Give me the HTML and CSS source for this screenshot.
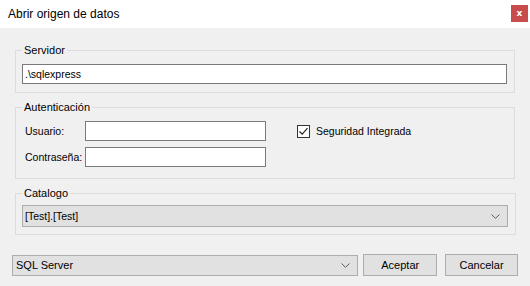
FILE: index.html
```html
<!DOCTYPE html>
<html lang="es">
<head>
    <meta charset="UTF-8">
    <title>Abrir origen de datos</title>
    <link rel="stylesheet" href="styles.css">
</head>
<body>

<div class="dialog">
    <!-- Barra de titulo -->
    <div class="title-bar">
        <span class="title">Abrir origen de datos</span>
        <button class="close-button">x</button>
    </div>

    <div class="content">
        <!-- Servidor -->
        <fieldset class="group">
            <legend>Servidor</legend>
            <input type="text" class="textbox wide" value=".\sqlexpress">
        </fieldset>

        <!-- Autenticacion -->
        <fieldset class="group">
            <legend>Autenticación</legend>
            <div class="auth">
                <div class="auth-fields">
                    <div class="field-row">
                        <label class="field-label">Usuario:</label>
                        <input type="text" class="textbox short">
                    </div>
                    <div class="field-row">
                        <label class="field-label">Contraseña:</label>
                        <input type="password" class="textbox short">
                    </div>
                </div>
                <label class="check">
                    <span class="check-box">
                        <svg width="11" height="11" viewBox="0 0 11 11"><polyline points="1.5,5.5 4.2,8.2 9.5,2.2" fill="none" stroke="#222" stroke-width="1.2"/></svg>
                    </span>
                    Seguridad Integrada
                </label>
            </div>
        </fieldset>

        <!-- Catalogo -->
        <fieldset class="group">
            <legend>Catalogo</legend>
            <div class="combo catalog">
                <span>[Test].[Test]</span>
                <svg class="arrow" width="9" height="5" viewBox="0 0 9 5"><polyline points="0.5,0.5 4.5,4.3 8.5,0.5" fill="none" stroke="#606060"/></svg>
            </div>
        </fieldset>

        <!-- Botones -->
        <div class="footer">
            <div class="combo provider">
                <span>SQL Server</span>
                <svg class="arrow" width="9" height="5" viewBox="0 0 9 5"><polyline points="0.5,0.5 4.5,4.3 8.5,0.5" fill="none" stroke="#606060"/></svg>
            </div>
            <button class="button accept">Aceptar</button>
            <button class="button cancel">Cancelar</button>
        </div>
    </div>
</div>

</body>
</html>
```

FILE: styles.css
```css
body {
    margin: 0;
    padding: 0;
    font-family: "Liberation Sans", Arial, sans-serif;
    font-size: 10.5px;
    color: #000;
    background-color: #f0f0f0;
}
.dialog {
    width: 530px;
    height: 286px;
    overflow: hidden;
    background-color: #f0f0f0;
}
.title-bar {
    height: 28px;
    background-color: #fff;
    display: flex;
    align-items: center;
    justify-content: space-between;
    padding: 0 2px 0 8px;
}
.title {
    font-size: 12px;
    line-height: 14px;
}
.close-button {
    width: 17px;
    height: 17px;
    margin-top: -2px;
    padding: 0;
    border: none;
    background-color: #c94c4c;
    color: #fff;
    font-family: "DejaVu Sans", sans-serif;
    font-weight: bold;
    font-size: 9px;
    line-height: 15px;
}
.content {
    padding: 15px 12px 0 12px;
}
/* Group boxes */
.group {
    margin: 0 3px 7px 3px;
    padding: 7px 7px 8px 6px;
    border: 1px solid #dcdcdc;
    border-radius: 0;
}
.group legend {
    padding: 0 2px;
    line-height: 14px;
    font-size: 11px;
}
.textbox {
    box-sizing: border-box;
    height: 20px;
    margin: 0;
    padding: 0 2px;
    border: 1px solid #7a7a7a;
    background-color: #fff;
    font-family: inherit;
    font-size: 10.5px;
    color: #000;
    outline: none;
}
.wide {
    width: 485px;
    display: block;
}
.short {
    width: 181px;
}
.auth {
    display: flex;
    padding-bottom: 3px;
}
.auth-fields {
    display: flex;
    flex-direction: column;
    gap: 6px;
}
.field-row {
    display: flex;
    align-items: center;
}
.field-label {
    width: 63px;
    padding-left: 3px;
    box-sizing: border-box;
    white-space: nowrap;
}
.check {
    display: flex;
    align-items: center;
    margin-left: 31px;
    height: 20px;
}
.check-box {
    box-sizing: border-box;
    width: 13px;
    height: 13px;
    border: 1px solid #333;
    background-color: #fff;
    margin-right: 6px;
    display: flex;
}
/* Combo boxes */
.combo {
    box-sizing: border-box;
    display: flex;
    align-items: center;
    justify-content: space-between;
    border: 1px solid #adadad;
    background-color: #e1e1e1;
    padding: 0 7px 0 2px;
}
.catalog {
    width: 486px;
    height: 22px;
    margin-top: -2px;
    margin-bottom: -1px;
}
.footer {
    display: flex;
    align-items: center;
    margin-top: 19px;
}
.provider {
    width: 347px;
    height: 21px;
    padding-left: 3px;
    font-size: 11px;
}
.button {
    box-sizing: border-box;
    height: 22px;
    margin: 0;
    padding: 0;
    border: 1px solid #adadad;
    background-color: #e1e1e1;
    font-family: inherit;
    font-size: 11px;
    color: #000;
}
.accept {
    width: 74px;
    margin-left: 5px;
}
.cancel {
    width: 73px;
    margin-left: 8px;
}
```
